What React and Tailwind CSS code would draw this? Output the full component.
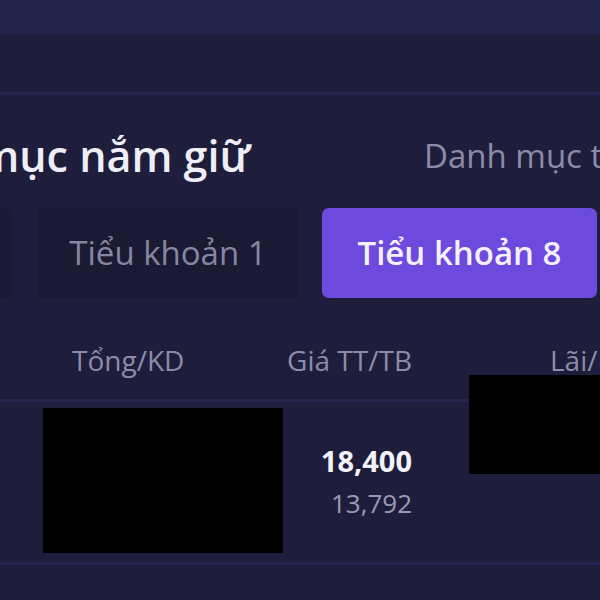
const tabs = [
  { label: "Tất cả", active: false, width: "w-[202px]", ml: "-ml-[190px]" },
  { label: "Tiểu khoản 1", active: false, width: "w-[262px]", ml: "ml-[25px]" },
  { label: "Tiểu khoản 8", active: true, width: "w-[275px]", ml: "ml-[23px]" },
  { label: "Tiểu khoản 9", active: false, width: "w-[262px]", ml: "ml-[24px]" },
]

const App = () => {
  return (
    <div
      className="w-[600px] h-[600px] overflow-hidden bg-[#1e1e3c] relative"
      style={{ fontFamily: '"Open Sans", "Noto Sans", sans-serif' }}
    >
      {/* top bar */}
      <div className="h-[34px] bg-[#22244b]" />
      <div className="h-[58px]" />
      <div className="h-[3px] bg-[#24244e]" />

      {/* title row */}
      <div className="flex items-center justify-between pt-[36px] h-[86px] whitespace-nowrap">
        <h1 className="-ml-[144px] text-[43px] leading-[48px] font-semibold text-[#eeeef6]">
          Danh mục nắm giữ
        </h1>
        <span className="flex-none w-[176px] text-[33px] leading-[48px] text-[#8b8ba8]">
          Danh mục theo dõi
        </span>
      </div>

      {/* sub account tabs */}
      <div className="flex mt-[27px] h-[90px] whitespace-nowrap">
        {tabs.map((t) => (
          <div
            key={t.label}
            className={`${t.width} ${t.ml} flex-none flex items-center justify-center rounded-[7px] text-[33px] ${
              t.active ? "bg-[#6c4add] text-[#f4f1ff] font-semibold" : "bg-[#1a1a34] text-[#86869f]"
            }`}
          >
            {t.label}
          </div>
        ))}
      </div>

      {/* table header */}
      <div className="flex items-center pt-[22px] h-[101px] text-[28px] text-[#8c8ca8] whitespace-nowrap">
        <div className="w-[72px] flex-none" />
        <div className="w-[200px] flex-none">Tổng/KD</div>
        <div className="w-[140px] flex-none text-right">Giá TT/TB</div>
        <div className="ml-[138px]">Lãi/Lỗ</div>
      </div>
      <div className="h-[3px] bg-[#28264f]" />

      {/* row */}
      <div className="flex h-[160px]">
        <div className="w-[43px] flex-none" />
        <div className="w-[240px] flex-none pt-[6px]">
          <div className="h-[145px] bg-black" />
        </div>
        <div className="w-[129px] flex-none flex flex-col items-end pt-[40px]">
          <span className="text-[29px] leading-[38px] font-bold text-[#f2f2f8]">18,400</span>
          <span className="text-[26px] leading-[38px] mt-[4px] text-[#9a9ab4]">13,792</span>
        </div>
      </div>
      <div className="h-[3px] bg-[#25254f]" />

      {/* redaction over P/L column */}
      <div className="absolute left-[469px] top-[375px] w-[131px] h-[99px] bg-black" />
    </div>
  )
}

export default App
